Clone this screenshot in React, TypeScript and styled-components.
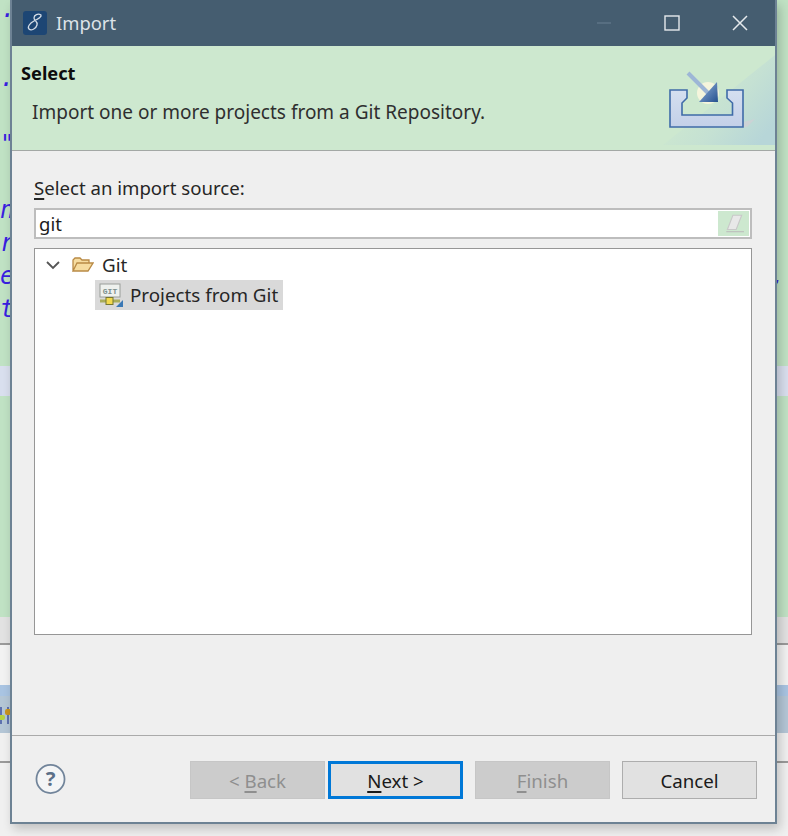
import React from "react";
import styled, { createGlobalStyle } from "styled-components";

const GlobalStyle = createGlobalStyle`
  html, body {
    margin: 0;
    height: 100%;
    overflow: hidden;
    background: #f0f0f0;
  }
`;

const Screen = styled.div`
  position: relative;
  width: 788px;
  height: 836px;
  overflow: hidden;
  font-family: "Noto Sans", "Open Sans", sans-serif;
`;

// the editor and the views behind the dialog
const Workbench = styled.div`
  display: flex;
  flex-direction: column;
  height: 100%;
`;

const EditorPane = styled.div`
  flex: 0 0 617px;
  display: flex;
  flex-direction: column;
  background: #c0e2c4;
  overflow: hidden;
`;

const CodeLine = styled.div<{ $h: number; $marked?: boolean }>`
  flex: 0 0 ${(p) => p.$h}px;
  display: flex;
  justify-content: space-between;
  align-items: center;
  padding: 0 3px 0 0;
  background: ${(p) => (p.$marked ? "#d9dfee" : "transparent")};
  color: #3a1fe0;
  font-family: "DejaVu Sans Mono", monospace;
  font-style: italic;
  font-size: 24px;
  line-height: 33px;
`;

const Band = styled.div<{ $h: number; $bg: string }>`
  flex: 0 0 ${(p) => p.$h}px;
  background: ${(p) => p.$bg};
  overflow: hidden;
`;

const ToolIcon = styled.svg`
  display: block;
  width: 11px;
  height: 37px;
`;

const Dialog = styled.div`
  position: absolute;
  left: 10px;
  top: 0;
  width: 767px;
  height: 824px;
  box-sizing: border-box;
  display: flex;
  flex-direction: column;
  border: 2px solid #6d8294;
  border-top: 0;
  background: #efefef;
  box-shadow: 3px 5px 10px rgba(0, 0, 0, 0.2);
`;

const TitleBar = styled.div`
  flex: 0 0 46px;
  display: flex;
  align-items: center;
  background: #455d70;
  color: #dde3e8;
  font-size: 18.4px;
`;

const AppIcon = styled.svg`
  width: 24px;
  height: 24px;
  margin: 0 9px 0 11px;
`;

const TitleText = styled.span`
  flex: 1;
  padding-bottom: 2px;
`;

const WindowButton = styled.svg`
  width: 16px;
  height: 16px;
  margin-right: 52px;
  &:last-child {
    margin-right: 27px;
  }
`;

const Banner = styled.div`
  flex: 0 0 105px;
  box-sizing: border-box;
  position: relative;
  display: flex;
  flex-direction: column;
  background: #cde8cf;
  border-bottom: 1.5px solid #a3a8a5;
  overflow: hidden;
`;

const BannerTitle = styled.div`
  margin: 15px 0 0 9px;
  font-size: 18.2px;
  font-weight: 700;
  line-height: 24px;
  color: #0c0c0c;
`;

const BannerText = styled.div`
  margin: 15px 0 0 20px;
  font-size: 19px;
  line-height: 24px;
  color: #2f2f2f;
`;

const BannerArt = styled.svg`
  position: absolute;
  right: 0;
  top: 0;
  width: 120px;
  height: 103px;
`;

const Body = styled.div`
  flex: 1;
  display: flex;
  flex-direction: column;
  padding: 25px 23px 100px 22px;
`;

const FieldLabel = styled.label`
  font-size: 18.6px;
  line-height: 24px;
  color: #262626;
  margin-bottom: 8px;
`;

const Key = styled.span`
  text-decoration: underline;
  text-underline-offset: 3px;
  text-decoration-thickness: 1.5px;
`;

const FilterBox = styled.div`
  flex: 0 0 31px;
  box-sizing: border-box;
  display: flex;
  align-items: stretch;
  background: #fff;
  border: 2px solid #bdbdbd;
  padding: 1px;
  margin-bottom: 9px;
`;

const FilterInput = styled.div`
  flex: 1;
  padding-left: 2px;
  font-size: 18.5px;
  line-height: 25px;
  color: #1c1c1c;
`;

const ClearButton = styled.div`
  flex: 0 0 31px;
  display: flex;
  align-items: center;
  justify-content: center;
  background: #cde8cf;
`;

const Tree = styled.div`
  flex: 1;
  box-sizing: border-box;
  background: #fff;
  border: 1.5px solid #969696;
  padding-top: 1px;
`;

const TreeRow = styled.div<{ $indent: number; $selected?: boolean }>`
  display: flex;
  align-items: center;
  width: fit-content;
  height: 30px;
  margin-left: ${(p) => p.$indent}px;
  padding-right: 5px;
  background: ${(p) => (p.$selected ? "#d9d9d9" : "transparent")};
  font-size: 18.8px;
  color: #262626;
`;

const TreeIcon = styled.svg<{ $gap: number; $lead: number }>`
  flex: none;
  margin: 0 ${(p) => p.$gap}px 0 ${(p) => p.$lead}px;
`;

const Footer = styled.div`
  flex: 0 0 87px;
  box-sizing: border-box;
  display: flex;
  align-items: flex-start;
  border-top: 1.5px solid #aaaaaa;
  padding: 25px 18px 0 23px;
`;

const HelpIcon = styled.svg`
  width: 32px;
  height: 32px;
  margin: 2px 124px 0 0;
`;

const Actions = styled.div`
  display: flex;
  gap: 12px;
`;

const NavPair = styled.div`
  display: flex;
  gap: 3px;
`;

const Button = styled.div<{ $disabled?: boolean; $focused?: boolean }>`
  width: 135px;
  height: 38px;
  box-sizing: border-box;
  display: flex;
  align-items: center;
  justify-content: center;
  font-size: 18.7px;
  color: ${(p) => (p.$disabled ? "#8f8f8f" : "#1a1a1a")};
  background: ${(p) => (p.$disabled ? "#cccccc" : "#e1e1e1")};
  border: ${(p) =>
    p.$focused
      ? "3px solid #0078d7"
      : p.$disabled
        ? "1.5px solid #c6c6c6"
        : "1.5px solid #adadad"};
`;

const codeLines = [
  { text: "·", h: 30 },
  { text: "", h: 29 },
  { text: ".", h: 33 },
  { text: "", h: 33 },
  { text: '"', h: 30 },
  { text: "", h: 33 },
  { text: "n", h: 33 },
  { text: "r", h: 33 },
  { text: "e", tail: ",", h: 33 },
  { text: "t", h: 33 },
  { text: "", h: 40 },
  { text: "", h: 30, marked: true },
];

function App() {
  return (
    <>
      <GlobalStyle />
      <Screen>
        <Workbench>
          <EditorPane>
            {codeLines.map((line, i) => (
              <CodeLine key={i} $h={line.h} $marked={line.marked}>
                <span>{line.text}</span>
                <span>{line.tail}</span>
              </CodeLine>
            ))}
          </EditorPane>
          <Band $h={26} $bg="#e2e2e2" />
          <Band $h={2} $bg="#9a9a9a" />
          <Band $h={40} $bg="#f2f2f2" />
          <Band $h={11} $bg="#a9c4e2" />
          <Band $h={37} $bg="#b4c6d6">
            <ToolIcon viewBox="0 0 11 37">
              <path d="M1 11v17M8 11v17" stroke="#3a4f9e" strokeWidth="1.4" />
              <rect x="-3" y="19" width="8" height="5" rx="2" fill="#b6d23f" />
              <rect x="5" y="13" width="6" height="6" rx="2" fill="#c8941f" />
            </ToolIcon>
          </Band>
          <Band $h={28} $bg="#f0f0f0" />
          <Band $h={2} $bg="#9a9a9a" />
          <Band $h={73} $bg="#f0f0f0" />
        </Workbench>

        <Dialog>
          <TitleBar>
            <AppIcon viewBox="0 0 24 24">
              <rect width="24" height="24" rx="3" fill="#1d4674" />
              <path
                d="M18 4c-3-2-7 0-7 3 0 3 4 3 3 7-1 4-6 6-8 4-2-2 1-6 5-8 4-2 8-4 7-6z"
                fill="none"
                stroke="#d5dde6"
                strokeWidth="1.3"
              />
            </AppIcon>
            <TitleText>Import</TitleText>
            <WindowButton viewBox="0 0 16 16">
              <path d="M1 8h14" stroke="#5f7688" strokeWidth="1.4" />
            </WindowButton>
            <WindowButton viewBox="0 0 16 16">
              <rect x="1" y="1" width="14" height="14" fill="none" stroke="#e6eaed" strokeWidth="1.4" />
            </WindowButton>
            <WindowButton viewBox="0 0 16 16">
              <path d="M1 1l14 14M15 1L1 15" stroke="#e6eaed" strokeWidth="1.5" />
            </WindowButton>
          </TitleBar>

          <Banner>
            <BannerTitle>Select</BannerTitle>
            <BannerText>Import one or more projects from a Git Repository.</BannerText>
            <BannerArt viewBox="0 0 120 103">
              <defs>
                <linearGradient id="corner" x1="0.3" y1="0.3" x2="1" y2="0.75">
                  <stop offset="0" stopColor="#cde8cf" />
                  <stop offset="0.5" stopColor="#c5e1d3" />
                  <stop offset="1" stopColor="#b7d6d8" />
                </linearGradient>
                <linearGradient id="tray" x1="0" y1="0" x2="0" y2="1">
                  <stop offset="0" stopColor="#d5dff0" />
                  <stop offset="1" stopColor="#c3d0e8" />
                </linearGradient>
                <linearGradient id="head" x1="0" y1="0" x2="1" y2="1">
                  <stop offset="0" stopColor="#9ab8de" />
                  <stop offset="1" stopColor="#24508f" />
                </linearGradient>
              </defs>
              <path d="M8 99L120 9V99z" fill="url(#corner)" />
              <path d="M70 81l30-8-8 8z" fill="#d6cdd6" opacity="0.6" />
              <circle cx="53" cy="47" r="11" fill="#f5f5dc" />
              <path
                d="M15 44h17v8l-5 5v12h50.500V57l-5.500-5v-8H88v37H15z"
                fill="url(#tray)"
                stroke="#3f6ba8"
                strokeWidth="1.6"
              />
              <path d="M33 27l20 20" stroke="#9db6d6" strokeWidth="4" />
              <path d="M62 36l1 20H44z" fill="url(#head)" />
            </BannerArt>
          </Banner>

          <Body>
            <FieldLabel>
              <Key>S</Key>elect an import source:
            </FieldLabel>
            <FilterBox>
              <FilterInput>git</FilterInput>
              <ClearButton>
                <svg width="22" height="22" viewBox="0 0 20 20">
                  <path d="M9 2h8l-5 13H4z" fill="#e8e8e8" stroke="#c8c8c8" />
                  <path d="M3 17h16" stroke="#bcbcbc" />
                </svg>
              </ClearButton>
            </FilterBox>
            <Tree>
              <TreeRow $indent={10}>
                <TreeIcon width="16" height="16" viewBox="0 0 16 16" $lead={0} $gap={10}>
                  <path d="M2 5l6 6 6-6" fill="none" stroke="#555" strokeWidth="1.8" />
                </TreeIcon>
                <TreeIcon width="23" height="20" viewBox="0 0 23 20" $lead={0} $gap={8}>
                  <path
                    d="M2 16V5l2-2h5l2 2h7v3H6L2 16zM2 16h15l5-8H6z"
                    fill="#f6dca0"
                    stroke="#b98a45"
                    strokeWidth="1.3"
                  />
                </TreeIcon>
                Git
              </TreeRow>
              <TreeRow $indent={60} $selected>
                <TreeIcon width="26" height="26" viewBox="0 0 26 26" $lead={3} $gap={6}>
                  <rect x="2" y="2" width="20" height="13" fill="#eef1ee" stroke="#9a9e9a" />
                  <text x="12" y="11.5" textAnchor="middle" fontSize="8" fontFamily="Liberation Mono" fontWeight="700" fill="#7c8f8c">
                    GIT
                  </text>
                  <path d="M2 19h20" stroke="#a9ad5a" strokeWidth="3" />
                  <rect x="8" y="15.5" width="7" height="7" fill="#f2d94e" stroke="#77772f" />
                  <path d="M25 18v7h-7z" fill="#3a78b5" />
                </TreeIcon>
                Projects from Git
              </TreeRow>
            </Tree>
          </Body>

          <Footer>
            <HelpIcon viewBox="0 0 32 32">
              <circle cx="16" cy="16" r="14.5" fill="#f4f5f6" stroke="#71849a" strokeWidth="1.8" />
              <text x="16" y="23" textAnchor="middle" fontSize="21" fontWeight="700" fontFamily="Noto Sans" fill="#5c7089">
                ?
              </text>
            </HelpIcon>
            <Actions>
              <NavPair>
                <Button $disabled>
                  &lt;&nbsp;<Key>B</Key>ack
                </Button>
                <Button $focused>
                  <Key>N</Key>ext &gt;
                </Button>
              </NavPair>
              <Button $disabled>
                <Key>F</Key>inish
              </Button>
              <Button>Cancel</Button>
            </Actions>
          </Footer>
        </Dialog>
      </Screen>
    </>
  );
}

export default App;
